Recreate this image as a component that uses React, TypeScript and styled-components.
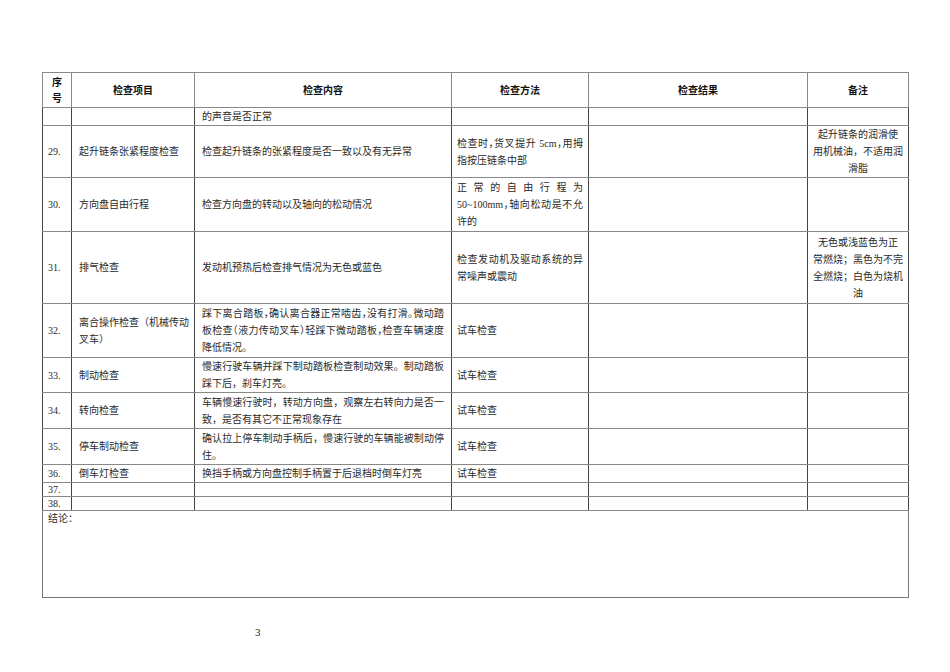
import React from "react";
import styled, { createGlobalStyle } from "styled-components";

const Global = createGlobalStyle`
  html, body { margin: 0; padding: 0; background: #fff; }
  body { font-family: "Liberation Serif", "Noto Sans CJK SC", serif; color: #2a2a2a; }
`;

const Page = styled.div`
  width: 950px;
  height: 672px;
  box-sizing: border-box;
  padding: 72px 42px 0 42px;
  background: #fff;
`;

const Table = styled.table`
  width: 866px;
  border-collapse: collapse;
  table-layout: fixed;
  font-size: 10px;
  border: 1px solid #777;
`;

const Row = styled.tr<{ $h: number }>`
  height: ${(p) => p.$h}px;
`;

const HeadCell = styled.th`
  border: 1px solid #888;
  font-family: "Noto Sans CJK SC", sans-serif;
  font-weight: 700;
  font-size: 10px;
  line-height: 16px;
  text-align: center;
  vertical-align: middle;
  padding: 0;
  color: #111;
`;

const Cell = styled.td<{ $align?: "left" | "center"; $pad?: number; $lh?: number }>`
  border-left: 1px solid #444;
  border-right: 1px solid #444;
  border-top: 1px solid #888;
  border-bottom: 1px solid #888;
  padding: 0 ${(p) => p.$pad ?? 6}px;
  text-align: ${(p) => p.$align ?? "left"};
  vertical-align: middle;
  line-height: ${(p) => p.$lh ?? 17}px;
  font-size: 10px;
  overflow: hidden;
  white-space: nowrap;
`;

const NumCell = styled(Cell)`
  padding-left: 5px;
  padding-right: 0;
  font-family: "Liberation Serif", serif;
`;

const Line = styled.span<{ $justify?: boolean; $tight?: boolean }>`
  display: block;
  white-space: nowrap;
  text-align: ${(p) => (p.$justify ? "justify" : "inherit")};
  text-align-last: ${(p) => (p.$justify ? "justify" : "auto")};
  font-feature-settings: ${(p) => (p.$tight ? '"halt"' : "normal")};
`;

const Conclusion = styled.td`
  border: 1px solid #777;
  vertical-align: top;
  padding: 1px 5px;
  font-size: 10px;
  line-height: 14px;
`;

const PageNumber = styled.div`
  margin-top: 28px;
  padding-left: 213px;
  font-family: "Liberation Serif", serif;
  font-size: 11px;
  line-height: 12px;
  color: #222;
`;

type Block = { lines: string[]; tight?: boolean };
type Text = string | Block;

type RowData = {
  n: string;
  item: Text;
  content: Text;
  method: Text;
  note: Text;
  h: number;
};

const rows: RowData[] = [
  { n: "", item: "", content: "的声音是否正常", method: "", note: "", h: 18 },
  {
    n: "29.",
    item: "起升链条张紧程度检查",
    content: "检查起升链条的张紧程度是否一致以及有无异常",
    method: { lines: ["检查时，货叉提升 5cm，用拇", "指按压链条中部"], tight: true },
    note: { lines: ["起升链条的润滑使", "用机械油，不适用润", "滑脂"] },
    h: 52,
  },
  {
    n: "30.",
    item: "方向盘自由行程",
    content: "检查方向盘的转动以及轴向的松动情况",
    method: { lines: ["正常的自由行程为", "50~100mm，轴向松动是不允", "许的"], tight: true },
    note: "",
    h: 54,
  },
  {
    n: "31.",
    item: "排气检查",
    content: "发动机预热后检查排气情况为无色或蓝色",
    method: { lines: ["检查发动机及驱动系统的异", "常噪声或震动"] },
    note: { lines: ["无色或浅蓝色为正", "常燃烧；黑色为不完", "全燃烧；白色为烧机", "油"] },
    h: 72,
  },
  {
    n: "32.",
    item: { lines: ["离合操作检查（机械传动", "叉车）"] },
    content: {
      lines: [
        "踩下离合踏板，确认离合器正常啮齿，没有打滑。微动踏",
        "板检查（液力传动叉车）轻踩下微动踏板，检查车辆速度",
        "降低情况。",
      ],
      tight: true,
    },
    method: "试车检查",
    note: "",
    h: 54,
  },
  {
    n: "33.",
    item: "制动检查",
    content: { lines: ["慢速行驶车辆并踩下制动踏板检查制动效果。制动踏板", "踩下后，刹车灯亮。"] },
    method: "试车检查",
    note: "",
    h: 35,
  },
  {
    n: "34.",
    item: "转向检查",
    content: { lines: ["车辆慢速行驶时，转动方向盘，观察左右转向力是否一", "致，是否有其它不正常现象存在"] },
    method: "试车检查",
    note: "",
    h: 36,
  },
  {
    n: "35.",
    item: "停车制动检查",
    content: { lines: ["确认拉上停车制动手柄后，慢速行驶的车辆能被制动停", "住。"] },
    method: "试车检查",
    note: "",
    h: 36,
  },
  {
    n: "36.",
    item: "倒车灯检查",
    content: "换挡手柄或方向盘控制手柄置于后退档时倒车灯亮",
    method: "试车检查",
    note: "",
    h: 18,
  },
  { n: "37.", item: "", content: "", method: "", note: "", h: 14 },
  { n: "38.", item: "", content: "", method: "", note: "", h: 14 },
];

function renderText(t: Text, justifyFull: boolean) {
  if (typeof t === "string") return t;
  return t.lines.map((l, i) => (
    <Line key={i} $justify={justifyFull && i < t.lines.length - 1} $tight={t.tight}>
      {l}
    </Line>
  ));
}

export default function App() {
  return (
    <Page>
      <Global />
      <Table>
        <colgroup>
          <col style={{ width: 29 }} />
          <col style={{ width: 123 }} />
          <col style={{ width: 257 }} />
          <col style={{ width: 137 }} />
          <col style={{ width: 219 }} />
          <col style={{ width: 101 }} />
        </colgroup>
        <thead>
          <Row $h={35}>
            <HeadCell>
              序<br />号
            </HeadCell>
            <HeadCell>检查项目</HeadCell>
            <HeadCell>检查内容</HeadCell>
            <HeadCell>检查方法</HeadCell>
            <HeadCell>检查结果</HeadCell>
            <HeadCell>备注</HeadCell>
          </Row>
        </thead>
        <tbody>
          {rows.map((r, i) => {
            const lh = r.h <= 14 ? 13 : 17;
            return (
              <Row key={i} $h={r.h}>
                <NumCell $lh={lh}>{r.n}</NumCell>
                <Cell $pad={7} $lh={lh}>{renderText(r.item, false)}</Cell>
                <Cell $pad={7} $lh={lh}>{renderText(r.content, true)}</Cell>
                <Cell $pad={5} $lh={lh}>{renderText(r.method, true)}</Cell>
                <Cell $lh={lh}></Cell>
                <Cell $align="center" $pad={3} $lh={lh}>{renderText(r.note, false)}</Cell>
              </Row>
            );
          })}
          <Row $h={87}>
            <Conclusion colSpan={6}>结论：</Conclusion>
          </Row>
        </tbody>
      </Table>
      <PageNumber>3</PageNumber>
    </Page>
  );
}
